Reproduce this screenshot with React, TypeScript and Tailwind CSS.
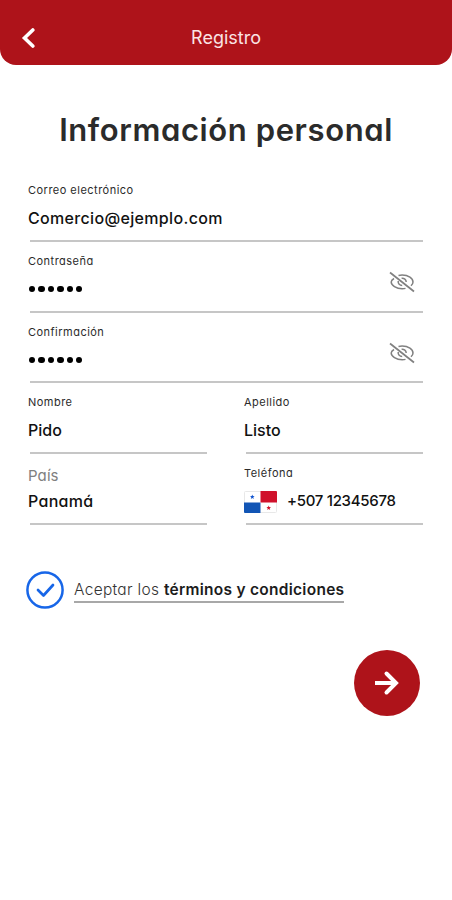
import type { ReactNode } from 'react'

interface FieldProps {
  label: string
  height?: string
  labelClass?: string
  valueClass?: string
  children: ReactNode
}

const Field = ({
  label,
  height = 'h-[71px]',
  labelClass = 'pt-[12px] text-[11px] tracking-[0.48px] text-[#2b2b2b]',
  valueClass = 'pb-[2px]',
  children,
}: FieldProps) => {
  return (
    <div className={`flex flex-col ${height}`}>
      <div className={`leading-[14px] whitespace-nowrap ${labelClass}`}>{label}</div>
      <div className={`flex flex-1 items-center text-[16px] font-medium text-[#111] ${valueClass}`}>{children}</div>
      <div className="ml-0.5 h-[2px] bg-[#c6c6c6]" />
    </div>
  )
}

const PasswordDots = () => (
  <>
    <div className="ml-[1px] flex gap-[3px]">
      {[0, 1, 2, 3, 4, 5].map(i => (
        <span key={i} className="size-[6.4px] rounded-full bg-black" />
      ))}
    </div>
    <EyeOff />
  </>
)

const EyeOff = () => (
  <svg className="mt-[-14px] mr-[7px] ml-auto" width="28" height="22" viewBox="0 0 28 22" fill="none" stroke="#808080" strokeWidth="1.5">
    <path d="M2 1.500 26 20.500" strokeWidth="1.7" />
    <path d="M6 7.500C4 8.700 3.200 10 3.200 11c0 3.200 5 6.800 11 6.800 1.200 0 2.300-.1 3.300-.4" />
    <path d="M10.500 4.500c1.200-.3 2.400-.5 3.600-.5C20.500 4 25 7.500 25 11c0 1.400-.8 2.700-2 3.800" />
    <path d="M10.200 10c-.4 2.700 1.600 4.300 4 4.400M13.600 7.200c2.500-.3 4.600 1.300 4.600 3.800" />
  </svg>
)

const PanamaFlag = () => (
  <svg width="33" height="22" viewBox="0 0 33 22">
    <rect x=".5" y=".5" width="32" height="21" rx="1" fill="#fff" stroke="#e8e8e8" />
    <path d="M16.500 0H32q1 0 1 1v10.500H16.500z" fill="#d0112b" />
    <path d="M0 11.500h16.500V22H1q-1 0-1-1z" fill="#1255b5" />
    <path d="m8.300 3.500.6 1.600 1.700.1-1.300 1 .5 1.700-1.500-1-1.500 1 .5-1.700-1.300-1 1.700-.1z" fill="#1255d0" />
    <path d="m24.700 14.500.6 1.600 1.700.1-1.300 1 .5 1.700-1.500-1-1.500 1 .5-1.700-1.300-1 1.700-.1z" fill="#d0112b" />
  </svg>
)

export default function App() {
  return (
    <div className="h-[900px] w-[452px] overflow-hidden bg-white font-['Inter',sans-serif] [font-feature-settings:'cv11']">
      <header className="grid h-[65px] grid-cols-[60px_1fr_60px] items-center rounded-b-[16px] bg-[#ae131a] pt-[10px]">
        <button aria-label="Volver" className="pl-[21px]">
          <svg width="14" height="20" viewBox="0 0 14 20" fill="none" stroke="#fff" strokeWidth="3.600">
            <path d="M11.800 2 3.500 10l8.300 8" strokeLinecap="round" />
          </svg>
        </button>
        <div className="text-center text-[18px] text-[#fbe4e4]">Registro</div>
      </header>

      <h1 className="mt-[45px] text-center text-[31px] leading-[40px] font-semibold tracking-[0.6px] whitespace-nowrap text-[#2b2b2b]">
        Información personal
      </h1>

      <form className="mt-[21px] mr-[29px] ml-[28px]">
        <Field label="Correo electrónico">
          <span className="tracking-[0.33px]">Comercio@ejemplo.com</span>
        </Field>
        <Field label="Contraseña" valueClass="pb-px">
          <PasswordDots />
        </Field>
        <Field label="Confirmación" height="h-[70px]" valueClass="pb-0">
          <PasswordDots />
        </Field>

        <div className="grid grid-cols-[179px_179px] justify-between">
          <Field label="Nombre">
            Pido
          </Field>
          <Field label="Apellido">
            Listo
          </Field>
          <Field
            label="País"
            labelClass="pt-[15px] text-[15px] tracking-[0.1px] text-[#808080]"
            valueClass="pb-[5px] tracking-[0.3px]"
          >
            Panamá
          </Field>
          <Field label="Teléfona" valueClass="pb-0">
            <PanamaFlag />
            <span className="ml-[10px] text-[15px] tracking-[-0.3px] whitespace-nowrap">+507 12345678</span>
          </Field>
        </div>
      </form>

      <div className="mt-[46px] ml-[26px] flex items-center">
        <svg width="38" height="38" viewBox="0 0 38 38" fill="none" stroke="#1766e8">
          <circle cx="19" cy="19" r="17.600" strokeWidth="2.500" />
          <path d="m12 19 5.500 5.500L27 14" strokeWidth="2.700" strokeLinecap="round" strokeLinejoin="round" />
        </svg>
        <p className="ml-[10px] border-b-2 border-[#a8a8a8] text-[15.5px] leading-[23px] whitespace-nowrap text-[#333]">
          <span className="font-light tracking-[0.3px]">Aceptar los </span>
          <span className="font-semibold tracking-[0.27px] text-[#1c1c1c]">términos y condiciones</span>
        </p>
      </div>

      <div className="mt-[41px] mr-[32px] flex justify-end">
        <button aria-label="Continuar" className="flex size-[66px] items-center justify-center rounded-full bg-[#ae131a]">
          <svg width="26" height="26" viewBox="0 0 26 26" fill="none" stroke="#fff" strokeWidth="4">
            <path d="M1 13h21" />
            <path d="m12.500 3.500 9.500 9.500-9.500 9.500" strokeLinecap="round" strokeLinejoin="miter" />
          </svg>
        </button>
      </div>
    </div>
  )
}
